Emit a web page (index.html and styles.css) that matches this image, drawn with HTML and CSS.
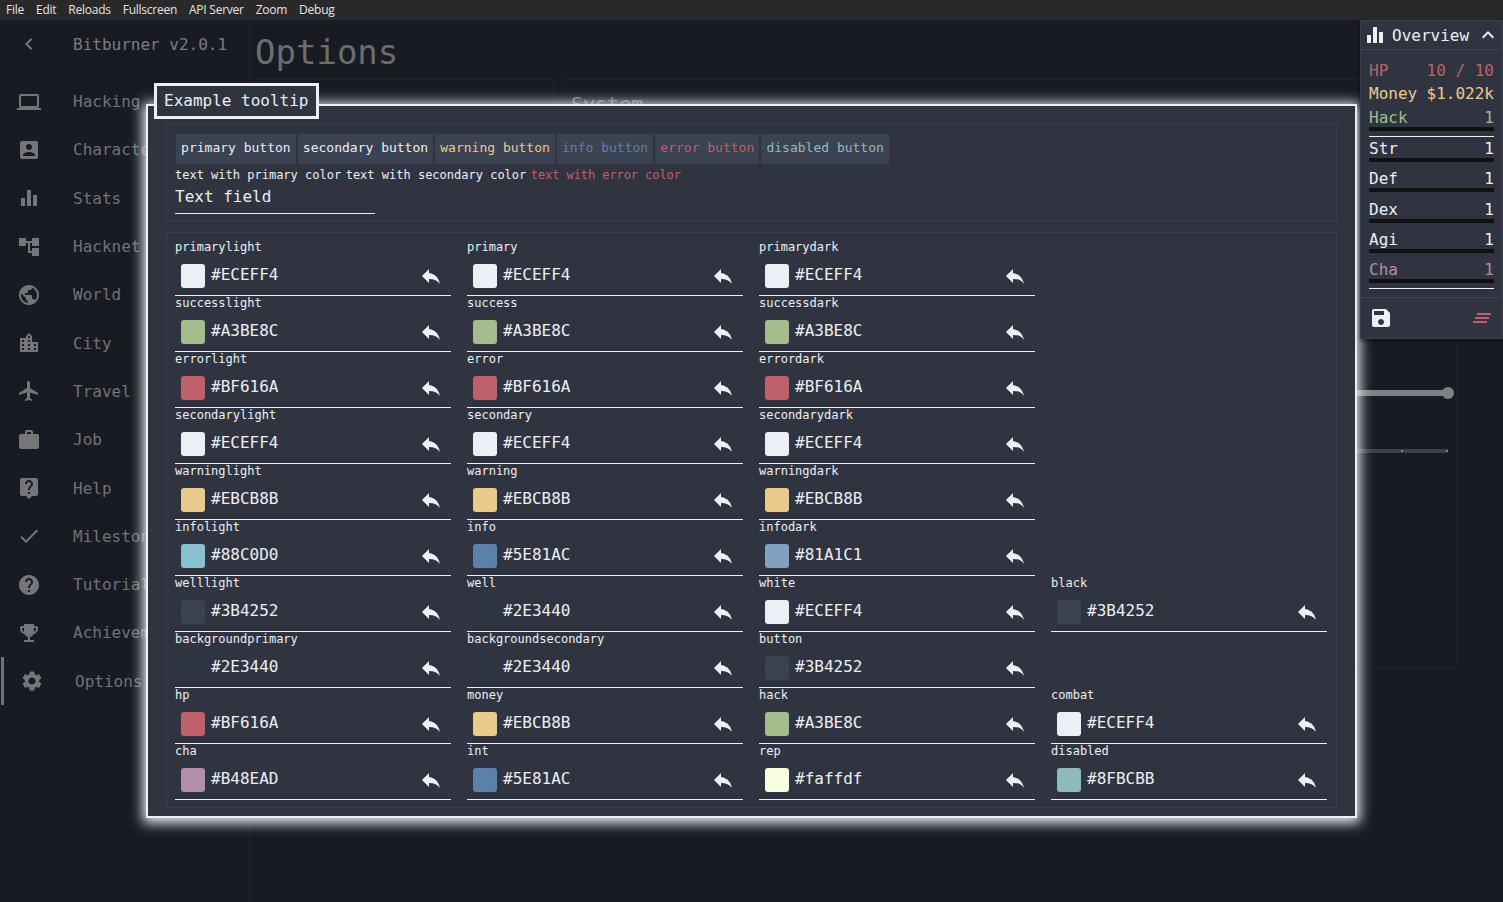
FILE: index.html
```html
<!DOCTYPE html>
<html lang="en">
<head>
  <meta charset="UTF-8">
  <title>Bitburner</title>
  <link rel="stylesheet" href="styles.css">
</head>
<body>
  <!-- shared icons -->
  <svg class="icon-defs" aria-hidden="true">
    <symbol id="i-reply" viewBox="0 0 24 24"><path d="M10 9V5l-7 7 7 7v-4.1c5 0 8.5 1.6 11 5.1-1-5-4-10-11-11z"/></symbol>
  </svg>

  <nav class="menubar">
    <span>File</span><span>Edit</span><span>Reloads</span><span>Fullscreen</span><span>API Server</span><span>Zoom</span><span>Debug</span>
  </nav>

  <div class="app">
    <aside class="sidebar">
      <div class="sidebar-head">
        <svg class="nav-icon" viewBox="0 0 24 24"><path d="M15.41 7.41 14 6l-6 6 6 6 1.41-1.41L10.83 12z"/></svg>
        <span>Bitburner v2.0.1</span>
      </div>
      <ul class="nav-list">
        <li class="nav-item"><svg class="nav-icon" viewBox="0 0 24 24"><path d="M20 18c1.1 0 1.99-.9 1.99-2L22 6c0-1.1-.9-2-2-2H4c-1.1 0-2 .9-2 2v10c0 1.1.9 2 2 2H0v2h24v-2h-4zM4 6h16v10H4V6z"/></svg><span>Hacking</span></li>
        <li class="nav-item"><svg class="nav-icon" viewBox="0 0 24 24"><path d="M3 5v14c0 1.1.89 2 2 2h14c1.1 0 2-.9 2-2V5c0-1.1-.9-2-2-2H5c-1.11 0-2 .9-2 2zm12 4c0 1.66-1.34 3-3 3s-3-1.34-3-3 1.34-3 3-3 3 1.34 3 3zm-9 8c0-2 4-3.1 6-3.1s6 1.1 6 3.1v1H6v-1z"/></svg><span>Character</span></li>
        <li class="nav-item"><svg class="nav-icon" viewBox="0 0 24 24"><path d="M10 20h4V4h-4v16zm-6 0h4v-8H4v8zM16 9v11h4V9h-4z"/></svg><span>Stats</span></li>
        <li class="nav-item"><svg class="nav-icon" viewBox="0 0 24 24"><path d="M22 11V3h-7v3H9V3H2v8h7V8h2v10h4v3h7v-8h-7v3h-2V8h2v3z"/></svg><span>Hacknet</span></li>
        <li class="nav-item"><svg class="nav-icon" viewBox="0 0 24 24"><path d="M12 2C6.48 2 2 6.48 2 12s4.48 10 10 10 10-4.48 10-10S17.52 2 12 2zm-1 17.93c-3.95-.49-7-3.85-7-7.93 0-.62.08-1.21.21-1.79L9 15v1c0 1.1.9 2 2 2v1.93zm6.9-2.54c-.26-.81-1-1.39-1.9-1.39h-1v-3c0-.55-.45-1-1-1H8v-2h2c.55 0 1-.45 1-1V7h2c1.1 0 2-.9 2-2v-.41c2.93 1.19 5 4.06 5 7.41 0 2.08-.8 3.97-2.1 5.39z"/></svg><span>World</span></li>
        <li class="nav-item"><svg class="nav-icon" viewBox="0 0 24 24"><path d="M15 11V5l-3-3-3 3v2H3v14h18V11h-6zm-8 8H5v-2h2v2zm0-4H5v-2h2v2zm0-4H5V9h2v2zm6 8h-2v-2h2v2zm0-4h-2v-2h2v2zm0-4h-2V9h2v2zm0-4h-2V5h2v2zm6 12h-2v-2h2v2zm0-4h-2v-2h2v2z"/></svg><span>City</span></li>
        <li class="nav-item"><svg class="nav-icon" viewBox="0 0 24 24"><path d="M21 16v-2l-8-5V3.5c0-.83-.67-1.5-1.5-1.5S10 2.67 10 3.5V9l-8 5v2l8-2.5V19l-2 1.5V22l3.5-1 3.5 1v-1.5L13 19v-5.5l8 2.5z"/></svg><span>Travel</span></li>
        <li class="nav-item"><svg class="nav-icon" viewBox="0 0 24 24"><path d="M20 6h-4V4c0-1.11-.89-2-2-2h-4c-1.11 0-2 .89-2 2v2H4c-1.11 0-1.99.89-1.99 2L2 19c0 1.11.89 2 2 2h16c1.11 0 2-.89 2-2V8c0-1.11-.89-2-2-2zm-6 0h-4V4h4v2z"/></svg><span>Job</span></li>
        <li class="nav-item"><svg class="nav-icon" viewBox="0 0 24 24"><path d="M19 2H5c-1.11 0-2 .9-2 2v14c0 1.1.89 2 2 2h4l3 3 3-3h4c1.1 0 2-.9 2-2V4c0-1.1-.9-2-2-2zm-6 16h-2v-2h2v2zm2.07-7.75l-.9.92C13.45 11.9 13 12.5 13 14h-2v-.5c0-1.1.45-2.1 1.17-2.83l1.24-1.26c.37-.36.59-.86.59-1.41 0-1.1-.9-2-2-2s-2 .9-2 2H8c0-2.21 1.79-4 4-4s4 1.79 4 4c0 .88-.36 1.68-.93 2.25z"/></svg><span>Help</span></li>
        <li class="nav-item"><svg class="nav-icon" viewBox="0 0 24 24"><path d="M9 16.17 4.83 12l-1.42 1.41L9 19 21 7l-1.41-1.41z"/></svg><span>Milestones</span></li>
        <li class="nav-item"><svg class="nav-icon" viewBox="0 0 24 24"><path d="M12 2C6.48 2 2 6.48 2 12s4.48 10 10 10 10-4.48 10-10S17.52 2 12 2zm1 17h-2v-2h2v2zm2.07-7.75-.9.92C13.45 12.9 13 13.5 13 15h-2v-.5c0-1.1.45-2.1 1.17-2.83l1.24-1.26c.37-.36.59-.86.59-1.41 0-1.1-.9-2-2-2s-2 .9-2 2H8c0-2.21 1.79-4 4-4s4 1.79 4 4c0 .88-.36 1.68-.93 2.25z"/></svg><span>Tutorial</span></li>
        <li class="nav-item"><svg class="nav-icon" viewBox="0 0 24 24"><path d="M19 5h-2V3H7v2H5c-1.1 0-2 .9-2 2v1c0 2.55 1.92 4.63 4.39 4.94.63 1.5 1.98 2.63 3.61 2.96V19H7v2h10v-2h-4v-3.1c1.63-.33 2.98-1.46 3.61-2.96C19.08 12.63 21 10.55 21 8V7c0-1.1-.9-2-2-2zM5 8V7h2v3.82C5.84 10.4 5 9.3 5 8zm14 0c0 1.3-.84 2.4-2 2.82V7h2v1z"/></svg><span>Achievements</span></li>
        <li class="nav-item nav-active"><svg class="nav-icon" viewBox="0 0 24 24"><path d="M19.14 12.94c.04-.3.06-.61.06-.94 0-.32-.02-.64-.07-.94l2.03-1.58c.18-.14.23-.41.12-.61l-1.92-3.32c-.12-.22-.37-.29-.59-.22l-2.39.96c-.5-.38-1.03-.7-1.62-.94l-.36-2.54c-.04-.24-.24-.41-.48-.41h-3.84c-.24 0-.43.17-.47.41l-.36 2.54c-.59.24-1.13.57-1.62.94l-2.39-.96c-.22-.08-.47 0-.59.22L2.74 8.87c-.12.21-.08.47.12.61l2.03 1.58c-.05.3-.09.63-.09.94s.02.64.07.94l-2.03 1.58c-.18.14-.23.41-.12.61l1.92 3.32c.12.22.37.29.59.22l2.39-.96c.5.38 1.03.7 1.62.94l.36 2.54c.05.24.24.41.48.41h3.84c.24 0 .44-.17.47-.41l.36-2.54c.59-.24 1.13-.56 1.62-.94l2.39.96c.22.08.47 0 .59-.22l1.92-3.32c.12-.22.07-.47-.12-.61l-2.01-1.58zM12 15.6c-1.98 0-3.6-1.62-3.6-3.6s1.62-3.6 3.6-3.6 3.6 1.62 3.6 3.6-1.62 3.6-3.6 3.6z"/></svg><span>Options</span></li>
      </ul>
    </aside>

    <main class="content">
      <h1 class="page-title">Options</h1>
      <div class="option-panels">
        <section class="option-panel option-left"></section>
        <section class="option-panel option-right">
          <h2 class="panel-title">System</h2>
          <div class="slider slider-main"><span class="slider-thumb"></span></div>
          <div class="slider slider-small"><span class="slider-mark"></span><span class="slider-mark"></span></div>
        </section>
      </div>
    </main>
  </div>

  <!-- theme editor modal -->
  <div class="modal">
    <section class="preview-panel">
      <div class="button-row">
        <button class="btn">primary button</button>
        <button class="btn">secondary button</button>
        <button class="btn btn-warning">warning button</button>
        <button class="btn btn-info">info button</button>
        <button class="btn btn-error">error button</button>
        <button class="btn btn-disabled">disabled button</button>
      </div>
      <div class="text-row">
        <span>text with primary color</span>
        <span>text with secondary color</span>
        <span class="text-error">text with error color</span>
      </div>
      <div class="text-field">Text field</div>
    </section>

    <section class="colors-panel">
      <div class="color-field"><label>primarylight</label><div class="color-input"><span class="swatch sw-eceff4"></span><span class="color-value">#ECEFF4</span><svg class="reset-icon"><use href="#i-reply"/></svg></div></div>
      <div class="color-field"><label>primary</label><div class="color-input"><span class="swatch sw-eceff4"></span><span class="color-value">#ECEFF4</span><svg class="reset-icon"><use href="#i-reply"/></svg></div></div>
      <div class="color-field"><label>primarydark</label><div class="color-input"><span class="swatch sw-eceff4"></span><span class="color-value">#ECEFF4</span><svg class="reset-icon"><use href="#i-reply"/></svg></div></div>
      <div></div>

      <div class="color-field"><label>successlight</label><div class="color-input"><span class="swatch sw-a3be8c"></span><span class="color-value">#A3BE8C</span><svg class="reset-icon"><use href="#i-reply"/></svg></div></div>
      <div class="color-field"><label>success</label><div class="color-input"><span class="swatch sw-a3be8c"></span><span class="color-value">#A3BE8C</span><svg class="reset-icon"><use href="#i-reply"/></svg></div></div>
      <div class="color-field"><label>successdark</label><div class="color-input"><span class="swatch sw-a3be8c"></span><span class="color-value">#A3BE8C</span><svg class="reset-icon"><use href="#i-reply"/></svg></div></div>
      <div></div>

      <div class="color-field"><label>errorlight</label><div class="color-input"><span class="swatch sw-bf616a"></span><span class="color-value">#BF616A</span><svg class="reset-icon"><use href="#i-reply"/></svg></div></div>
      <div class="color-field"><label>error</label><div class="color-input"><span class="swatch sw-bf616a"></span><span class="color-value">#BF616A</span><svg class="reset-icon"><use href="#i-reply"/></svg></div></div>
      <div class="color-field"><label>errordark</label><div class="color-input"><span class="swatch sw-bf616a"></span><span class="color-value">#BF616A</span><svg class="reset-icon"><use href="#i-reply"/></svg></div></div>
      <div></div>

      <div class="color-field"><label>secondarylight</label><div class="color-input"><span class="swatch sw-eceff4"></span><span class="color-value">#ECEFF4</span><svg class="reset-icon"><use href="#i-reply"/></svg></div></div>
      <div class="color-field"><label>secondary</label><div class="color-input"><span class="swatch sw-eceff4"></span><span class="color-value">#ECEFF4</span><svg class="reset-icon"><use href="#i-reply"/></svg></div></div>
      <div class="color-field"><label>secondarydark</label><div class="color-input"><span class="swatch sw-eceff4"></span><span class="color-value">#ECEFF4</span><svg class="reset-icon"><use href="#i-reply"/></svg></div></div>
      <div></div>

      <div class="color-field"><label>warninglight</label><div class="color-input"><span class="swatch sw-ebcb8b"></span><span class="color-value">#EBCB8B</span><svg class="reset-icon"><use href="#i-reply"/></svg></div></div>
      <div class="color-field"><label>warning</label><div class="color-input"><span class="swatch sw-ebcb8b"></span><span class="color-value">#EBCB8B</span><svg class="reset-icon"><use href="#i-reply"/></svg></div></div>
      <div class="color-field"><label>warningdark</label><div class="color-input"><span class="swatch sw-ebcb8b"></span><span class="color-value">#EBCB8B</span><svg class="reset-icon"><use href="#i-reply"/></svg></div></div>
      <div></div>

      <div class="color-field"><label>infolight</label><div class="color-input"><span class="swatch sw-88c0d0"></span><span class="color-value">#88C0D0</span><svg class="reset-icon"><use href="#i-reply"/></svg></div></div>
      <div class="color-field"><label>info</label><div class="color-input"><span class="swatch sw-5e81ac"></span><span class="color-value">#5E81AC</span><svg class="reset-icon"><use href="#i-reply"/></svg></div></div>
      <div class="color-field"><label>infodark</label><div class="color-input"><span class="swatch sw-81a1c1"></span><span class="color-value">#81A1C1</span><svg class="reset-icon"><use href="#i-reply"/></svg></div></div>
      <div></div>

      <div class="color-field"><label>welllight</label><div class="color-input"><span class="swatch sw-3b4252"></span><span class="color-value">#3B4252</span><svg class="reset-icon"><use href="#i-reply"/></svg></div></div>
      <div class="color-field"><label>well</label><div class="color-input"><span class="swatch sw-2e3440"></span><span class="color-value">#2E3440</span><svg class="reset-icon"><use href="#i-reply"/></svg></div></div>
      <div class="color-field"><label>white</label><div class="color-input"><span class="swatch sw-eceff4"></span><span class="color-value">#ECEFF4</span><svg class="reset-icon"><use href="#i-reply"/></svg></div></div>
      <div class="color-field"><label>black</label><div class="color-input"><span class="swatch sw-3b4252"></span><span class="color-value">#3B4252</span><svg class="reset-icon"><use href="#i-reply"/></svg></div></div>

      <div class="color-field"><label>backgroundprimary</label><div class="color-input"><span class="swatch sw-2e3440"></span><span class="color-value">#2E3440</span><svg class="reset-icon"><use href="#i-reply"/></svg></div></div>
      <div class="color-field"><label>backgroundsecondary</label><div class="color-input"><span class="swatch sw-2e3440"></span><span class="color-value">#2E3440</span><svg class="reset-icon"><use href="#i-reply"/></svg></div></div>
      <div class="color-field"><label>button</label><div class="color-input"><span class="swatch sw-3b4252"></span><span class="color-value">#3B4252</span><svg class="reset-icon"><use href="#i-reply"/></svg></div></div>
      <div></div>

      <div class="color-field"><label>hp</label><div class="color-input"><span class="swatch sw-bf616a"></span><span class="color-value">#BF616A</span><svg class="reset-icon"><use href="#i-reply"/></svg></div></div>
      <div class="color-field"><label>money</label><div class="color-input"><span class="swatch sw-ebcb8b"></span><span class="color-value">#EBCB8B</span><svg class="reset-icon"><use href="#i-reply"/></svg></div></div>
      <div class="color-field"><label>hack</label><div class="color-input"><span class="swatch sw-a3be8c"></span><span class="color-value">#A3BE8C</span><svg class="reset-icon"><use href="#i-reply"/></svg></div></div>
      <div class="color-field"><label>combat</label><div class="color-input"><span class="swatch sw-eceff4"></span><span class="color-value">#ECEFF4</span><svg class="reset-icon"><use href="#i-reply"/></svg></div></div>

      <div class="color-field"><label>cha</label><div class="color-input"><span class="swatch sw-b48ead"></span><span class="color-value">#B48EAD</span><svg class="reset-icon"><use href="#i-reply"/></svg></div></div>
      <div class="color-field"><label>int</label><div class="color-input"><span class="swatch sw-5e81ac"></span><span class="color-value">#5E81AC</span><svg class="reset-icon"><use href="#i-reply"/></svg></div></div>
      <div class="color-field"><label>rep</label><div class="color-input"><span class="swatch sw-faffdf"></span><span class="color-value">#faffdf</span><svg class="reset-icon"><use href="#i-reply"/></svg></div></div>
      <div class="color-field"><label>disabled</label><div class="color-input"><span class="swatch sw-8fbcbb"></span><span class="color-value">#8FBCBB</span><svg class="reset-icon"><use href="#i-reply"/></svg></div></div>
    </section>
  </div>

  <div class="tooltip">Example tooltip</div>

  <!-- character overview, floats over everything -->
  <aside class="overview">
    <div class="overview-head">
      <svg class="ov-icon" viewBox="0 0 24 24"><path d="M10 20h4V4h-4v16zm-6 0h4v-8H4v8zM16 9v11h4V9h-4z"/></svg>
      <span class="overview-title">Overview</span>
      <svg class="ov-icon" viewBox="0 0 24 24"><path d="M7.41 15.41 12 10.83l4.59 4.58L18 14l-6-6-6 6z"/></svg>
    </div>
    <div class="overview-stats">
      <div class="stat-line stat-hp"><span>HP</span><span>10 / 10</span></div>
      <div class="stat-line stat-money"><span>Money</span><span>$1.022k</span></div>
      <div class="stat stat-first stat-hack"><span>Hack</span><span>1</span></div>
      <div class="stat-bar"></div>
      <div class="stat-rule"></div>
      <div class="stat stat-first"><span>Str</span><span>1</span></div>
      <div class="stat-bar"></div>
      <div class="stat"><span>Def</span><span>1</span></div>
      <div class="stat-bar"></div>
      <div class="stat"><span>Dex</span><span>1</span></div>
      <div class="stat-bar"></div>
      <div class="stat"><span>Agi</span><span>1</span></div>
      <div class="stat-bar"></div>
      <div class="stat stat-cha"><span>Cha</span><span>1</span></div>
      <div class="stat-bar"></div>
      <div class="stat-rule stat-rule-end"></div>
    </div>
    <div class="overview-foot">
      <svg class="ov-icon" viewBox="0 0 24 24"><path d="M17 3H5c-1.11 0-2 .9-2 2v14c0 1.1.89 2 2 2h14c1.1 0 2-.9 2-2V7l-4-4zm-5 16c-1.66 0-3-1.34-3-3s1.34-3 3-3 3 1.34 3 3-1.34 3-3 3zm3-10H5V5h10v4z"/></svg>
      <svg class="ov-icon ov-kill" viewBox="0 0 24 24"><path d="M5 13h14v-2H5v2zm-2 4h14v-2H3v2zM7 7v2h14V7H7z"/></svg>
    </div>
  </aside>
</body>
</html>
```

FILE: styles.css
```css
* { box-sizing: border-box; }
html, body { margin: 0; height: 100%; }
body {
  position: relative;
  height: 902px;
  overflow: hidden;
  background: #181b22;
  color: #eceff4;
  font-family: "DejaVu Sans Mono", "Liberation Mono", monospace;
  font-size: 16px;
}
.icon-defs { display: none; }

/* menu bar */
.menubar {
  display: flex;
  height: 20px;
  background: #292929;
  color: #e4e4e4;
  font-family: "Open Sans", "Liberation Sans", sans-serif;
  font-size: 12px;
  line-height: 20px;
  letter-spacing: -0.25px;
}
.menubar span { padding: 0 6px; }

/* dimmed page behind the modal */
.app { display: flex; height: 882px; }
.sidebar {
  width: 250px;
  flex: none;
  border-right: 1px solid #20232b;
  color: #717377;
}
.sidebar-head {
  display: flex;
  align-items: center;
  gap: 32px;
  height: 49px;
  padding-left: 17px;
  border-bottom: 1px solid #1c1f27;
  color: #7b7d81;
}
.nav-list { list-style: none; margin: 0; padding: 8.5px 0 0; }
.nav-item {
  display: flex;
  align-items: center;
  gap: 32px;
  height: 48.3px;
  padding-left: 17px;
  white-space: nowrap;
}
.nav-active { gap: 31px; margin-left: 1px; padding-left: 16px; border-left: 3px solid #717377; }
.nav-icon { width: 24px; height: 24px; flex: none; fill: #74767a; }

.content { flex: 1; padding-left: 6px; }
.page-title {
  margin: 0 0 0 -1px;
  height: 59px;
  padding-top: 12px;
  color: #6b6d71;
  font-size: 34px;
  font-weight: normal;
  line-height: 40px;
}
.option-panels { display: flex; gap: 8px; }
.option-panel { height: 589px; border: 1px solid #20232b; }
.option-left { width: 298px; }
.option-right { width: 895px; padding: 12px 8px; }
.panel-title {
  margin: 0;
  color: #6b6d71;
  font-size: 20px;
  font-weight: normal;
  line-height: 24px;
}
.slider { position: relative; margin-left: 300px; }
.slider-main { height: 6px; margin-top: 274px; background: #7e8084; }
.slider-thumb {
  position: absolute;
  top: -3px;
  right: -6px;
  width: 12px;
  height: 12px;
  border-radius: 50%;
  background: #7e8084;
}
.slider-small {
  display: flex;
  justify-content: flex-end;
  gap: 43px;
  align-items: center;
  height: 4px;
  margin-top: 53px;
  background: #3e4045;
}
.slider-mark { width: 2px; height: 2px; background: #7e8084; }

/* modal */
.modal {
  position: absolute;
  left: 146px;
  top: 104px;
  width: 1211px;
  padding: 18px 18px 8px;
  background: #303441;
  border: 2px solid #eceff4;
  box-shadow: 0 2px 12px 3px #eceff4;
}
.preview-panel, .colors-panel { border: 1px solid #3a3f4d; }
.preview-panel { height: 98px; padding: 9px 8px 7px; }
.button-row { display: flex; gap: 2px; margin-left: 1px; }
.btn {
  height: 30px;
  padding: 0 5.1px 3px;
  border: none;
  background: #3b4252;
  color: #eceff4;
  font: 13px "DejaVu Sans Mono", "Liberation Mono", monospace;
}
.btn-warning { color: #ebcb8b; }
.btn-info { color: #5e81ac; }
.btn-error { color: #bf616a; }
.btn-disabled { color: #8fbcbb; }
.text-row {
  display: flex;
  gap: 4.5px;
  margin-top: 4px;
  font-size: 12px;
  line-height: 14px;
}
.text-error { color: #bf616a; letter-spacing: -0.08px; }
.text-field {
  width: 200px;
  margin-top: 6px;
  padding-bottom: 7px;
  border-bottom: 1px solid #eceff4;
  line-height: 18px;
}

.colors-panel {
  display: grid;
  grid-template-columns: repeat(4, 276px);
  column-gap: 16px;
  margin-top: 10px;
  padding: 7px 8px;
}
.color-field { height: 56px; border-bottom: 1px solid #eceff4; }
.color-field label { display: block; font-size: 12px; line-height: 14px; }
.color-input { display: flex; padding: 10px 8px 0 6px; }
.swatch { width: 24px; height: 24px; flex: none; border-radius: 3px; }
.color-value { margin-left: 6px; line-height: 22px; }
.reset-icon { width: 24px; height: 24px; margin-left: auto; fill: #eceff4; }
.sw-eceff4 { background: #eceff4; }
.sw-a3be8c { background: #a3be8c; }
.sw-bf616a { background: #bf616a; }
.sw-ebcb8b { background: #ebcb8b; }
.sw-88c0d0 { background: #88c0d0; }
.sw-5e81ac { background: #5e81ac; }
.sw-81a1c1 { background: #81a1c1; }
.sw-3b4252 { background: #3b4252; }
.sw-2e3440 { background: #2e3440; }
.sw-b48ead { background: #b48ead; }
.sw-faffdf { background: #faffdf; }
.sw-8fbcbb { background: #8fbcbb; }

.tooltip {
  position: absolute;
  left: 154px;
  top: 83px;
  width: 165px;
  height: 36px;
  padding-left: 7px;
  background: #303441;
  border: 3px solid #eceff4;
  line-height: 30px;
  white-space: nowrap;
}

/* overview */
.overview {
  position: absolute;
  left: 1360px;
  top: 20px;
  width: 143px;
  height: 319px;
  background: #303441;
  border: 1px solid #3a3f4d;
  box-shadow: 0 2px 4px rgba(0, 0, 0, 0.5);
}
.overview-head {
  display: flex;
  align-items: center;
  height: 29px;
  padding: 0 2px;
  border-bottom: 1px solid #3f4554;
}
.overview-title { margin-left: 5px; flex: 1; }
.ov-icon { width: 24px; height: 24px; flex: none; fill: #eceff4; }
.ov-kill { fill: #bf616a; }
.overview-stats { padding: 8px 8px 0; }
.stat-line, .stat { display: flex; justify-content: space-between; }
.stat-line { height: 24px; line-height: 24px; }
.stat { height: 26.3px; align-items: flex-end; line-height: 18px; }
.stat-first { height: 21px; }
.stat-hp { color: #bf616a; padding-top: 1px; }
.stat-money { color: #ebcb8b; }
.stat-hack { color: #a3be8c; }
.stat-cha { color: #b48ead; }
.stat-bar { height: 4px; background: #111; }
.stat-rule { height: 1px; margin-top: 5px; background: #eceff4; }
.stat-rule-end { margin-bottom: 8px; }
.overview-foot {
  display: flex;
  justify-content: space-between;
  align-items: center;
  height: 41px;
  padding: 0 8px;
  border-top: 1px solid #3f4554;
}
```
